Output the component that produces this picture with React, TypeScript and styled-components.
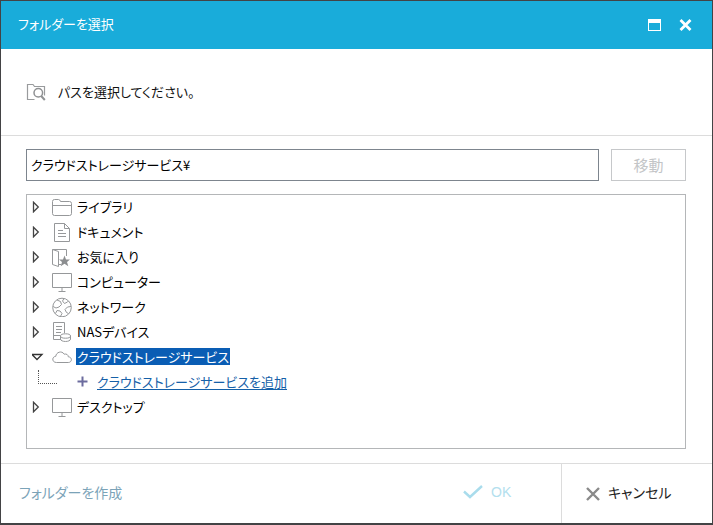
import React, { useState } from "react";
import styled, { createGlobalStyle, css } from "styled-components";

const GlobalStyle = createGlobalStyle`
  *, *::before, *::after { box-sizing: border-box; }
  body { margin: 0; background: #fff; }
  body, button, input {
    font-family: "Noto Sans CJK JP", sans-serif;
    font-feature-settings: "palt";
  }
  button { margin: 0; padding: 0; border: 0; background: none; color: inherit; }
`;

const Dialog = styled.main`
  display: flex;
  flex-direction: column;
  min-height: 100vh;
  border: 1px solid #434345;
  border-bottom-width: 2px;
  background: #fff;
  color: #111;
  font-size: 13px;
  line-height: 20px;
`;

const TitleBar = styled.header`
  display: flex;
  align-items: center;
  justify-content: space-between;
  height: 48px;
  padding: 0 20px 2px 17px;
  background: #19acda;
  color: #fff;
`;

const Title = styled.h1`
  margin: 0;
  font-size: 13px;
  font-weight: 400;
`;

const WindowButtons = styled.div`
  display: flex;
  gap: 18px;
  padding-top: 2px;
`;

const IconButton = styled.button`
  display: flex;
  align-items: center;
`;

const Prompt = styled.section`
  display: flex;
  align-items: center;
  gap: 12px;
  height: 87px;
  padding: 0 25px;
  border-bottom: 1px solid #dcdcdc;
  font-size: 13px;

  p { margin: 0; }
`;

const Content = styled.section`
  display: flex;
  flex: 1;
  flex-direction: column;
  gap: 13px;
  padding: 13px 26px 14px 25px;
`;

const PathRow = styled.form`
  display: flex;
  gap: 12px;
`;

const PathInput = styled.input`
  flex: 1;
  min-width: 0;
  height: 32px;
  padding: 0 4px 2px;
  border: 1px solid #7d858e;
  border-radius: 0;
  color: #000;
  font-size: 13px;
`;

const MoveButton = styled.button`
  width: 75px;
  height: 32px;
  padding-bottom: 2px;
  border: 1px solid #c6c8ca;
  color: #c3c5c7;
  font-size: 15px;
`;

const Tree = styled.ul`
  flex: 1;
  margin: 0;
  padding: 0;
  border: 1px solid #b4b6b8;
  list-style: none;

  ul { margin: 0; padding: 0; list-style: none; }
`;

const TreeRow = styled.div`
  display: grid;
  grid-template-columns: 20px 20px 1fr;
  align-items: center;
  height: 25px;
  padding: 0 0 2px 5px;
`;

const TreeLabel = styled.span<{ $selected?: boolean }>`
  justify-self: start;
  margin-left: 4px;
  padding: 0 1px;
  color: #000;
  line-height: 17px;
  ${(p) => p.$selected && css`background: #0a5db4; color: #fff;`}
`;

const ChildRow = styled.div`
  display: flex;
  align-items: center;
  gap: 9px;
  height: 25px;
  padding: 0 0 2px 11px;
`;

const Branch = styled.span`
  align-self: flex-start;
  width: 19px;
  height: 14px;
  margin-right: 11px;
  border-bottom: 1px dotted #555;
  border-left: 1px dotted #555;
`;

const AddLink = styled.a`
  color: #1560a8;
  line-height: 17px;
  text-decoration: underline;
  text-underline-offset: 2px;
`;

const Footer = styled.footer`
  display: flex;
  align-items: stretch;
  height: 60px;
  border-top: 1px solid #dcdcdc;
`;

const CreateButton = styled.button`
  padding: 0 18px 4px;
  color: #7ba3b8;
  font-size: 14px;
`;

const ActionButton = styled.button<{ $kind: "ok" | "cancel" }>`
  display: flex;
  align-items: center;
  gap: 8px;
  width: 151px;
  padding: 0 24px 4px;
  font-size: 14px;
  ${(p) =>
    p.$kind === "ok"
      ? css`
          width: 122px;
          margin-left: auto;
          color: #b3e0ee;
          font-family: "Liberation Sans", sans-serif;
        `
      : css`
          border-left: 1px solid #dcdcdc;
          color: #222;

          svg { margin-top: 4px; }
        `}
`;

const Glyph = ({ children }: { children: React.ReactNode }) => (
  <svg width="20" height="20" viewBox="0 0 20 20" fill="none" stroke="#96989a" aria-hidden="true">
    {children}
  </svg>
);

const FolderSearchIcon = () => (
  <Glyph>
    <path d="M8.5 17.5H1.5V2.5H7L8.5 4.5H18.5V13.5" stroke="#999b9d" strokeWidth="1.2" />
    <circle cx="12.3" cy="10.8" r="4.3" stroke="#8f9193" strokeWidth="1.5" />
    <path d="M15.2 14L18.8 18" stroke="#8f9193" strokeWidth="2" />
  </Glyph>
);

const MaximizeIcon = () => (
  <svg width="13" height="12" viewBox="0 0 13 12" aria-hidden="true">
    <path d="M0 0H13V12H0ZM1 4V11H12V4Z" fill="#fff" fillRule="evenodd" />
  </svg>
);

const CloseIcon = () => (
  <svg width="13" height="12" viewBox="0 0 13 12" aria-hidden="true">
    <path d="M1.5 1L11.5 11M11.5 1L1.5 11" stroke="#fff" strokeWidth="2.8" />
  </svg>
);

const ArrowIcon = ({ open }: { open: boolean }) =>
  open ? (
    <svg width="12" height="8" viewBox="1 0 12 8" aria-hidden="true">
      <path d="M1 1.5H11L6 6.5Z" fill="#fff" stroke="#333" strokeWidth="1.3" />
    </svg>
  ) : (
    <svg width="8" height="12" viewBox="0 0 8 12" aria-hidden="true">
      <path d="M1.5 1.2V10.8L6.3 6Z" fill="#fff" stroke="#444" strokeWidth="1.3" />
    </svg>
  );

const icons = {
  folder: (
    <Glyph>
      <path d="M.5 16.5V4.5Q.5 2.5 2.5 2.5H6.5Q8 2.5 8.5 4.5H17.5Q19.5 4.5 19.5 6.5V16.5Q19.5 18.5 17.5 18.5H2.5Q.5 18.5 .5 16.5ZM.5 8.5H19.5" />
    </Glyph>
  ),
  document: (
    <Glyph>
      <path d="M2.5 1.5H12.5L17.5 6.5V19.5H2.5ZM12.5 1.5V6.5H17.5M6 8.5H11M6 11.5H14M6 14.5H14" />
    </Glyph>
  ),
  favorites: (
    <Glyph>
      <path d="M6 2.5H14.5V9M.5 2.5L6.5 4.5V19.5L.5 17.5ZM.5 2.5H7M6.5 17.5H9" />
      <path d="M12.5 8.5L14 12.5H18L15 15L16.3 19.2L12.5 16.8L8.7 19.2L10 15L7 12.5H11Z" fill="#8c8e90" stroke="none" />
    </Glyph>
  ),
  monitor: (
    <Glyph>
      <path d="M.5 1.5H19.5V15.5H.5ZM10 16V19M6.5 19.5H13.5" />
    </Glyph>
  ),
  network: (
    <Glyph>
      <circle cx="10" cy="10.5" r="9.3" />
      <path d="M5 3L8.5 4.5L9.5 7.5L7 10L4 11L1 9.5M12 1.5L10.5 4L12.5 6.5L15.5 5L16.5 4M19 9.5L15.5 10L13 12.5L14.5 15.5L16.5 16.5M3.5 16.5L5 13.5L8 14L10 16.5L8.5 19.3" />
    </Glyph>
  ),
  nas: (
    <Glyph>
      <path d="M9 17.5H1.5V.5H12.5V11M4 4.5H10M4 7.5H10M4 10.5H9M1.5 13.5H8" />
      <ellipse cx="13.5" cy="14" rx="5" ry="2.2" fill="#fff" />
      <path d="M8.5 14V17C8.5 20.3 18.5 20.3 18.5 17V14" />
    </Glyph>
  ),
  cloud: (
    <Glyph>
      <path d="M4.5 15.5C-.2 15.5-.4 9.7 3.8 9.3C4 5.3 9.8 3.1 12.2 7.2C14.5 6.4 16.3 8 16.3 9.8C20.6 10.1 20.2 15.5 16.3 15.5Z" />
    </Glyph>
  ),
};

const nodes: { label: string; icon: keyof typeof icons }[] = [
  { label: "ライブラリ", icon: "folder" },
  { label: "ドキュメント", icon: "document" },
  { label: "お気に入り", icon: "favorites" },
  { label: "コンピューター", icon: "monitor" },
  { label: "ネットワーク", icon: "network" },
  { label: "NASデバイス", icon: "nas" },
  { label: "クラウドストレージサービス", icon: "cloud" },
  { label: "デスクトップ", icon: "monitor" },
];

export default function App() {
  const [path, setPath] = useState("クラウドストレージサービス¥");
  const [cloudOpen, setCloudOpen] = useState(true);

  return (
    <>
      <GlobalStyle />
      <Dialog>
        <TitleBar>
          <Title>フォルダーを選択</Title>
          <WindowButtons>
            <IconButton type="button" aria-label="最大化"><MaximizeIcon /></IconButton>
            <IconButton type="button" aria-label="閉じる"><CloseIcon /></IconButton>
          </WindowButtons>
        </TitleBar>
        <Prompt>
          <FolderSearchIcon />
          <p>パスを選択してください。</p>
        </Prompt>
        <Content>
          <PathRow onSubmit={(e) => e.preventDefault()}>
            <PathInput aria-label="パス" value={path} onChange={(e) => setPath(e.target.value)} />
            <MoveButton type="submit" disabled>移動</MoveButton>
          </PathRow>
          <Tree role="tree">
            {nodes.map((node) => {
              const isCloud = node.icon === "cloud";
              const open = isCloud && cloudOpen;
              return (
                <li key={node.label} role="treeitem" aria-expanded={open} aria-selected={isCloud}>
                  <TreeRow>
                    <IconButton
                      type="button"
                      aria-label={node.label}
                      onClick={() => isCloud && setCloudOpen(!cloudOpen)}
                    >
                      <ArrowIcon open={open} />
                    </IconButton>
                    {icons[node.icon]}
                    <TreeLabel $selected={isCloud}>{node.label}</TreeLabel>
                  </TreeRow>
                  {open && (
                    <ul role="group">
                      <li role="treeitem">
                        <ChildRow>
                          <Branch />
                          <svg width="11" height="11" viewBox="0 0 11 11" aria-hidden="true">
                            <path d="M5.5 .5V10.5M.5 5.5H10.5" stroke="#6c6c9e" strokeWidth="2" />
                          </svg>
                          <AddLink href="#add">クラウドストレージサービスを追加</AddLink>
                        </ChildRow>
                      </li>
                    </ul>
                  )}
                </li>
              );
            })}
          </Tree>
        </Content>
        <Footer>
          <CreateButton type="button">フォルダーを作成</CreateButton>
          <ActionButton type="button" $kind="ok" disabled>
            <svg width="20" height="14" viewBox="0 0 20 14" fill="none" aria-hidden="true">
              <path d="M1 6.5L7 12L19 1" stroke="#a9dcec" strokeWidth="2.4" />
            </svg>
            OK
          </ActionButton>
          <ActionButton type="button" $kind="cancel">
            <svg width="14" height="14" viewBox="0 0 14 14" aria-hidden="true">
              <path d="M1 1L13 13M13 1L1 13" stroke="#8a8a8a" strokeWidth="2.4" />
            </svg>
            キャンセル
          </ActionButton>
        </Footer>
      </Dialog>
    </>
  );
}
